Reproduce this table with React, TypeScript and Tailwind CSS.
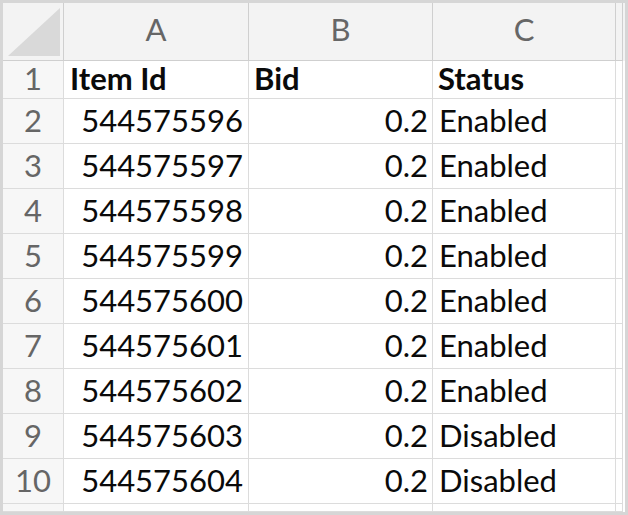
const ROWS: [string, string, string][] = [
  ['544575596', '0.2', 'Enabled'],
  ['544575597', '0.2', 'Enabled'],
  ['544575598', '0.2', 'Enabled'],
  ['544575599', '0.2', 'Enabled'],
  ['544575600', '0.2', 'Enabled'],
  ['544575601', '0.2', 'Enabled'],
  ['544575602', '0.2', 'Enabled'],
  ['544575603', '0.2', 'Disabled'],
  ['544575604', '0.2', 'Disabled'],
];

const cols = 'grid grid-cols-[61px_185px_184px_183px_7px]';
const cell = 'border-r border-b border-[#dcdcdc] flex items-center';

const App = () => {
  return (
    <div
      className="w-[628px] h-[515px] overflow-hidden border-[3px] border-[#d6d6d6] bg-white text-[31px] leading-none text-[#0a0a0a]"
      style={{ fontFamily: 'Lato, "Open Sans", sans-serif' }}
    >
      {/* column header bar */}
      <div className={`${cols} h-[58px] bg-[#f3f3f3]`}>
        <div className="border-r border-b border-[#cfcfcf] relative">
          <svg className="absolute left-[5px] top-[5px]" width="52" height="48" viewBox="0 0 52 48">
            <polygon points="52,0 52,48 0,48" fill="#d9d9d9" />
          </svg>
        </div>
        {['A', 'B', 'C'].map((l) => (
          <div key={l} className="border-r border-b border-[#cfcfcf] flex items-center justify-center pb-[4px] text-[#666]">
            {l}
          </div>
        ))}
        <div className="border-r border-b border-[#cfcfcf]" />
      </div>

      {/* row 1 */}
      <div className={`${cols} h-[38px]`}>
        <div className={`${cell} justify-center pb-[3px] bg-[#f7f7f7] text-[#666] border-[#d3d3d3]`}>1</div>
        <div className={`${cell} px-[6px] pb-[3px] font-bold`}>Item Id</div>
        <div className={`${cell} px-[5px] pb-[3px] font-bold`}>Bid</div>
        <div className={`${cell} px-[5px] pb-[3px] font-bold`}>Status</div>
        <div className={cell} />
      </div>

      {ROWS.map(([id, bid, status], i) => (
        <div key={id} className={`${cols} h-[45px]`}>
          <div className={`${cell} justify-center pb-[1px] bg-[#f7f7f7] text-[#666] border-[#d3d3d3]`}>{i + 2}</div>
          <div className={`${cell} justify-end px-[5px] pb-[1px]`}>{id}</div>
          <div className={`${cell} justify-end px-[4px] pb-[1px]`}>{bid}</div>
          <div className={`${cell} px-[6px] pb-[1px]`}>{status}</div>
          <div className={cell} />
        </div>
      ))}

      {/* partial row */}
      <div className={`${cols} h-[8px]`}>
        <div className={`${cell} bg-[#f7f7f7] border-[#d3d3d3]`} />
        <div className={cell} />
        <div className={cell} />
        <div className={cell} />
        <div className={cell} />
      </div>
    </div>
  );
};

export default App;
